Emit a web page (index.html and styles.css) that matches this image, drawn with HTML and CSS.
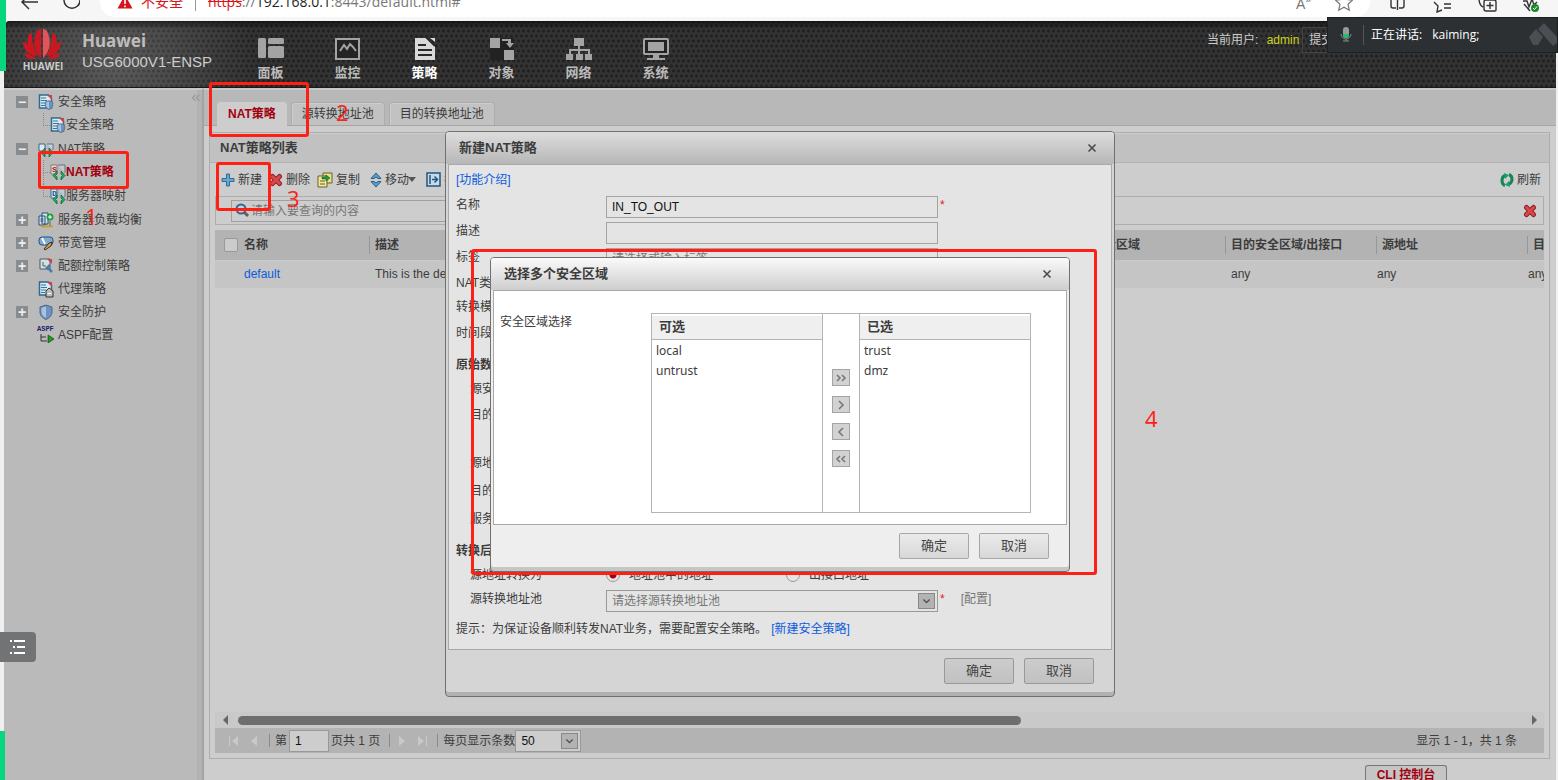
FILE: index.html
```html
<!DOCTYPE html>
<html lang="zh-CN">
<head>
<meta charset="utf-8">
<title>USG6000V1-ENSP</title>
<link rel="stylesheet" href="styles.css">
</head>
<body>
<svg class="defs" aria-hidden="true">
  <symbol id="doc" viewBox="0 0 16 16"><path d="M1.500 1h9l3 3v10h-12z" fill="#dce8ee" stroke="#2d6b92" stroke-width="1.500"/><path d="M3 4h5M3 6.500h6M3 9h5M3 11.500h4" stroke="#2b7ba6" stroke-width="1.200"/><path d="M9 1l5 5V1z" fill="#c44747"/></symbol>
  <symbol id="shield" viewBox="0 0 16 16"><path d="M8 1l6 2v5c0 4-3 6-6 7.500C5 14 2 12 2 8V3z" fill="#6c92bd" stroke="#4c678b"/><path d="M8 2.500v11.500c-2.500-1.500-4.500-3-4.500-6V4z" fill="#a9c2de"/></symbol>
  <symbol id="arrows" viewBox="0 0 16 16"><path d="M6 6L2 10.500 6 15v-3l-1.500-1.500L6 9zM10 6l4 4.500L10 15v-3l1.500-1.500L10 9z" fill="#1fae66" stroke="#0c6b3a" stroke-width=".8"/></symbol>
  <symbol id="cross" viewBox="0 0 14 14"><path d="M3.500 3.500l7 7M10.500 3.500l-7 7" stroke="#8e2127" stroke-width="5" stroke-linecap="round"/><path d="M3.500 3.500l7 7M10.500 3.500l-7 7" stroke="#d8494d" stroke-width="3" stroke-linecap="round"/></symbol>
  <symbol id="close" viewBox="0 0 10 10"><path d="M1.500 1.500l7 7M8.500 1.500l-7 7" stroke="#4a4a4a" stroke-width="1.600"/></symbol>
  <symbol id="chev" viewBox="0 0 10 10"><path d="M1 3l4 4 4-4" fill="none" stroke="#555" stroke-width="1.800"/></symbol>
</svg>

<div class="browser">
  <svg class="b-back" viewBox="0 0 60 34" width="60" height="34"><path d="M18 17H2M9 10l-7 7 7 7M46 10a8 8 0 1 0 12 0" fill="none" stroke="#333" stroke-width="1.500"/></svg>
  <div class="address">
    <svg width="16" height="16" viewBox="0 0 16 16"><path d="M8 1l7.500 13.500H.5z" fill="#d6141c"/><path d="M8 5v5M8 11.500v1.800" stroke="#fff" stroke-width="1.600"/></svg>
    <span class="insecure">不安全</span><span class="vbar"></span>
    <span class="url"><s>https</s>://<b>192.168.0.1</b>:8443/default.html#</span>
    <span class="read">A<sup>»</sup></span>
    <svg width="18" height="18" viewBox="0 0 18 18"><path d="M9 1l2.500 5.500 6 .7-4.500 4 1.300 6L9 14.200 3.700 17.200 5 11.200l-4.500-4 6-.7z" fill="none" stroke="#777" stroke-width="1.200"/></svg>
  </div>
  <svg class="b-tools" width="152" height="18" viewBox="0 0 152 18"><g fill="none" stroke="#333" stroke-width="1.400"><path d="M1 3v8q0 2 2 2h3M14 3v8q0 2-2 2H9M7.500 3v12"/><path d="M52 15l-5 2 1-6-4-4M54 9h7M54 13h7"/><path d="M96 5h8q2 0 2 2v8q0 1-1 1h-9q-2 0-2-2V7q0-2 2-2zM100 7v7M96.500 10.500h7M89 3q0 7 4 9"/><path d="M133 6h4l2 6 3-8 2 6 3-3M134 9l6 7"/></g><circle cx="145" cy="13" r="4" fill="#1a8a2e"/><path d="M143 13l1.500 1.500 2.500-3" stroke="#fff" fill="none"/></svg>
</div>

<div class="app">
  <header class="header">
    <div class="logo">
      <svg width="40" height="32" viewBox="0 0 40 32"><g fill="#cc1720"><path d="M19 30C12 23 10 14 15 3c2-2 4-2 4-2z"/><path d="M21 30C28 23 30 14 25 3c-2-2-4-2-4-2z" fill="#e2545a"/><path d="M17 29C8 24 4 16 6 8c1-2 3-3 4-3 0 9 1 16 7 24z"/><path d="M23 29c9-5 13-13 11-21-1-2-3-3-4-3 0 9-1 16-7 24z"/><path d="M14.500 29C7 27 1 22 1 13c4 2 9 8 13.500 16z"/><path d="M25.500 29C33 27 39 22 39 13c-4 2-9 8-13.500 16z"/><path d="M14.500 31H7c-2-1-4-3-5-6 5 1 9 3 12.500 6zM25.500 31H33c2-1 4-3 5-6-5 1-9 3-12.500 6z"/></g></svg>
      <span>HUAWEI</span>
    </div>
    <div class="product"><strong>Huawei</strong><span>USG6000V1-ENSP</span></div>
    <nav class="nav">
      <a href="#"><svg width="26" height="24" viewBox="0 0 26 24"><g fill="#a3a3a3"><rect x="0" y="2" width="8" height="20" rx="1.500"/><rect x="10" y="2" width="16" height="6" rx="1.500"/><rect x="10" y="10" width="16" height="12" rx="1.500"/></g></svg>面板</a>
      <a href="#"><svg width="26" height="24" viewBox="0 0 26 24"><rect x="1" y="3" width="23" height="20" fill="#242424" stroke="#a3a3a3" stroke-width="2"/><path d="M5 15l4-6 3 4 3-5 3 3 3 4" fill="none" stroke="#a3a3a3" stroke-width="2"/></svg>监控</a>
      <a href="#" class="on"><svg width="26" height="24" viewBox="0 0 26 24"><path d="M3 2h11l9 8v14H3z" fill="#d8d8d8"/><path d="M14 1l9 9M6 9h8M6 14h14M6 19h14" stroke="#292929" stroke-width="2"/><path d="M18 2h5v4z" fill="#d8d8d8"/></svg>策略</a>
      <a href="#"><svg width="26" height="24" viewBox="0 0 26 24"><path d="M1 2h24v22H1z" fill="#222"/><g fill="#a3a3a3"><path d="M1 2h10v10H1zM15 14h10v10H15zM13 3h9v4h3l-4 5-4-5h2V5h-6z"/></g></svg>对象</a>
      <a href="#"><svg width="26" height="24" viewBox="0 0 26 24"><path d="M8 2h10v8H8zM0 18h7v6H0zM10 18h7v6h-7zM19 18h7v6h-7z" fill="#a3a3a3"/><path d="M13 9v9M4 18v-4h19v4" fill="none" stroke="#a3a3a3" stroke-width="2"/></svg>网络</a>
      <a href="#"><svg width="26" height="24" viewBox="0 0 26 24"><rect x="1" y="3" width="24" height="15" rx="1" fill="#222" stroke="#a3a3a3" stroke-width="2"/><path d="M5 6h16v9H5zM10 19h6v3h6v2H4v-2h6z" fill="#a3a3a3"/></svg>系统</a>
    </nav>
    <div class="user"><span>当前用户: <em>admin</em></span><button>提交</button></div>
  </header>

  <div class="main">
    <aside class="side">
      <ul class="tree">
        <li class="top"><i class="tog">−</i><span class="ic"><svg><use href="#doc"/></svg><svg class="half"><use href="#shield"/></svg></span>安全策略</li>
        <li class="kid last"><span class="ic"><svg><use href="#doc"/></svg><svg class="half"><use href="#shield"/></svg></span>安全策略</li>
        <li class="top"><i class="tog">−</i><span class="ic"><svg viewBox="0 0 16 16"><path d="M1 3h6v7H1z" fill="#dfe9ee" stroke="#2d6b92"/><path d="M9 3h6v6" fill="#c9d4de" stroke="#5e7188"/></svg><svg class="over"><use href="#arrows"/></svg></span>NAT策略</li>
        <li class="kid sel"><span class="ic"><svg viewBox="0 0 16 16"><path d="M1 1h6v9H1z" fill="#e4dfe0" stroke="#8a7070"/><path d="M8 1h7v8" fill="#cfc3d5" stroke="#5e7188"/></svg><small class="s">S</small><svg class="over"><use href="#arrows"/></svg></span>NAT策略</li>
        <li class="kid last"><span class="ic"><svg viewBox="0 0 16 16"><path d="M1 1h6v9H1z" fill="#dbe7ef" stroke="#2d6b92"/><path d="M8 1h7v8" fill="#b9cfdc" stroke="#5e7188"/></svg><small class="d">D</small><svg class="over"><use href="#arrows"/></svg></span>服务器映射</li>
        <li class="top"><i class="tog">+</i><span class="ic"><svg viewBox="0 0 16 16"><path d="M4 1h6v11H4zM1 4h6v9H1z" fill="#d5e3ee" stroke="#2a4d78"/><path d="M2.500 7h3M2.500 9h3" stroke="#2a4d78"/><path d="M3 14.500h12" stroke="#caa02e" stroke-width="2"/><circle cx="12" cy="5" r="3.500" fill="#1f9e3c"/><path d="M12 3v4M10 5h4" stroke="#fff"/><path d="M12 9v5" stroke="#666"/></svg></span>服务器负载均衡</li>
        <li class="top"><i class="tog">+</i><span class="ic"><svg viewBox="0 0 16 16"><rect x="1" y="2" width="14" height="8" rx="3" fill="#7fabd0" stroke="#27527b"/><path d="M4 3l3 6" stroke="#fff" stroke-width="2"/><path d="M6 14l5-6 3-1-1 4-6 4z" fill="#d79a37" stroke="#333"/></svg></span>带宽管理</li>
        <li class="top"><i class="tog">+</i><span class="ic"><svg viewBox="0 0 16 16"><path d="M2 1h10v10H2z" fill="#d9dee2" stroke="#557"/><path d="M9 1l5 5V1z" fill="#c44747"/><path d="M5 4v4h3" fill="none" stroke="#16883c"/><path d="M9 9l5 5M8 11l4-4" stroke="#4b7ba4" stroke-width="2.500"/></svg></span>配额控制策略</li>
        <li class="top"><i class="tog none"></i><span class="ic"><svg><use href="#doc"/></svg><svg class="over" viewBox="0 0 16 16"><path d="M7 9l3-3 4 3v6H7z" fill="#bcbcbc" stroke="#333"/><path d="M8.500 11.500h4" stroke="#fff"/></svg></span>代理策略</li>
        <li class="top"><i class="tog">+</i><span class="ic"><svg><use href="#shield"/></svg></span>安全防护</li>
        <li class="top"><i class="tog none"></i><span class="ic"><small class="aspf">ASPF</small><svg viewBox="0 0 16 16"><path d="M3 7v7h6M3 10h5" fill="none" stroke="#333"/><path d="M10 8l6 4-6 4z" fill="#18a019" stroke="#222" stroke-width=".6"/></svg></span>ASPF配置</li>
      </ul>
      <button class="fold" aria-label="收起">«</button>
    </aside>

    <section class="content">
      <nav class="tabs"><a href="#" class="active">NAT策略</a><a href="#">源转换地址池</a><a href="#">目的转换地址池</a></nav>
      <div class="panel">
        <h1>NAT策略列表</h1>
        <div class="toolbar">
          <button><svg width="14" height="14" viewBox="0 0 14 14"><path d="M5.500 1h3v4.500H13v3H8.500V13h-3V8.500H1v-3h4.500z" fill="#68a9d1" stroke="#2d6c94"/></svg>新建</button>
          <button><svg width="14" height="14"><use href="#cross"/></svg>删除</button>
          <button class="wide"><svg width="16" height="16" viewBox="0 0 16 16"><path d="M6 1h9v10H6z" fill="#e9dd8a" stroke="#65602b"/><path d="M1 4h9v11H1z" fill="#f2e79b" stroke="#65602b"/><path d="M3 9h5M3 12h5" stroke="#65602b"/><path d="M5 5h4V3l4 3-4 3V7H5z" fill="#1f9a3e" stroke="#0b5a20" stroke-width=".5"/></svg>复制</button>
          <button class="wide"><svg width="12" height="16" viewBox="0 0 12 16"><path d="M6 1l5 5.500H8L6 5 4 6.500H1zM6 15l5-5.500H8L6 11 4 9.500H1z" fill="#5b9cc6" stroke="#2d6389"/></svg>移动<i class="caret"></i></button>
          <button><svg width="15" height="15" viewBox="0 0 15 15"><path d="M1 1h13v13H1z" fill="#c6dae8" stroke="#225680" stroke-width="1.500"/><path d="M4 3v9M6 7.500h5M8.500 4.500l3 3-3 3" fill="none" stroke="#225680" stroke-width="1.500"/></svg>插入</button>
          <button class="refresh"><svg width="14" height="14" viewBox="0 0 14 14"><path d="M5 12.500C1 11 1 4 5 2.500M9 1.500c4 1.500 4 8 0 9.500" fill="none" stroke="#138556" stroke-width="3"/><path d="M4 0l5 2-4 4zM10 14l-5-2 4-4z" fill="#1d9c63"/></svg>刷新</button>
        </div>
        <div class="search"><label><svg width="15" height="15" viewBox="0 0 15 15"><path d="M9 9l4 4" stroke="#665d59" stroke-width="3"/><circle cx="6" cy="6" r="4.500" fill="#c1d4e2" stroke="#37648d" stroke-width="2"/></svg><input type="text" placeholder="请输入要查询的内容" aria-label="查询"></label><button aria-label="清除"><svg width="14" height="14"><use href="#cross"/></svg></button></div>
        <div class="grid">
          <table>
            <colgroup><col class="c1"><col class="c2"><col class="c3"><col class="c4"><col class="c4"><col class="c4"></colgroup>
            <thead><tr><th><label><input type="checkbox" aria-label="全选">名称</label></th><th><span>描述</span></th><th><span>源安全区域</span></th><th><span>目的安全区域/出接口</span></th><th><span>源地址</span></th><th><span>目的地址</span></th></tr></thead>
            <tbody><tr><td class="first"><a href="#">default</a></td><td>This is the default rule</td><td>any</td><td>any</td><td class="near">any</td><td class="near">any</td></tr></tbody>
          </table>
        </div>
        <div class="hscroll"><i class="la"></i><div class="track"><div class="thumb"></div></div><i class="ra"></i></div>
        <div class="pager">
          <button aria-label="首页"><svg width="12" height="12" viewBox="0 0 12 12"><path d="M1 1h1v10H1zM10 1v10L4 6z"/></svg></button>
          <button aria-label="上一页"><svg width="12" height="12" viewBox="0 0 12 12"><path d="M9 1v10L3 6z"/></svg></button>
          <i class="sep"></i><label>第<input type="text" value="1">页共 1 页</label><i class="sep"></i>
          <button aria-label="下一页"><svg width="12" height="12" viewBox="0 0 12 12"><path d="M3 1v10l6-5z"/></svg></button>
          <button aria-label="末页"><svg width="12" height="12" viewBox="0 0 12 12"><path d="M10 1h1v10h-1zM2 1v10l6-5z"/></svg></button>
          <i class="sep"></i><label>每页显示条数<span class="pick"><select><option>50</option></select><svg><use href="#chev"/></svg></span></label>
          <span class="total">显示 1 - 1，共 1 条</span>
        </div>
      </div>
      <button class="cli">CLI 控制台</button>
    </section>
  </div>

  <section class="dialog policy" role="dialog" aria-labelledby="t1">
    <header><h2 id="t1">新建NAT策略</h2><button aria-label="关闭"><svg width="10" height="10"><use href="#close"/></svg></button></header>
    <div class="body">
      <a href="#" class="intro">[功能介绍]</a>
      <div class="row h26"><label for="n">名称</label><input id="n" type="text" value="IN_TO_OUT"><b class="req">*</b></div>
      <div class="row h26"><label for="d">描述</label><input id="d" type="text"></div>
      <div class="row h26"><label for="g">标签</label><input id="g" type="text" placeholder="请选择或输入标签"></div>
      <div class="row h24"><span>NAT类型</span></div>
      <div class="row h26"><span>转换模式</span></div>
      <div class="row h32"><span>时间段</span></div>
      <h3 class="row h24">原始数据包</h3>
      <div class="row h26 sub"><span>源安全区域</span></div>
      <div class="row h48 sub"><span>目的类型</span></div>
      <div class="row h28 sub"><span>源地址</span></div>
      <div class="row h28 sub"><span>目的地址</span></div>
      <div class="row h32 sub"><span>服务</span></div>
      <h3 class="row h24">转换后的数据包</h3>
      <div class="row h24 sub"><span>源地址转换为</span><label class="radio"><input type="radio" name="to" checked>地址池中的地址</label><label class="radio"><input type="radio" name="to">出接口地址</label></div>
      <div class="row h30 sub"><label for="p">源转换地址池</label><span class="pick"><select id="p"><option>请选择源转换地址池</option></select><svg><use href="#chev"/></svg></span><b class="req">*</b><a href="#" class="conf">[配置]</a></div>
      <p class="tip">提示：为保证设备顺利转发NAT业务，需要配置安全策略。<a href="#">[新建安全策略]</a></p>
    </div>
    <footer><button>确定</button><button>取消</button></footer>
  </section>

  <section class="dialog zones" role="dialog" aria-labelledby="t2">
    <header><h2 id="t2">选择多个安全区域</h2><button aria-label="关闭"><svg width="10" height="10"><use href="#close"/></svg></button></header>
    <div class="body">
      <span class="zlabel">安全区域选择</span>
      <div class="transfer">
        <div class="list"><h4>可选</h4><ul><li>local</li><li>untrust</li></ul></div>
        <div class="moves">
          <button aria-label="全部添加"><svg width="12" height="10" viewBox="0 0 12 10"><path d="M2 2l3 3-3 3M7 2l3 3-3 3"/></svg></button>
          <button aria-label="添加"><svg width="12" height="10" viewBox="0 0 12 10"><path d="M4 1l4 4-4 4"/></svg></button>
          <button aria-label="移除"><svg width="12" height="10" viewBox="0 0 12 10"><path d="M8 1L4 5l4 4"/></svg></button>
          <button aria-label="全部移除"><svg width="12" height="10" viewBox="0 0 12 10"><path d="M5 2L2 5l3 3M10 2L7 5l3 3"/></svg></button>
        </div>
        <div class="list right"><h4>已选</h4><ul><li>trust</li><li>dmz</li></ul></div>
      </div>
    </div>
    <footer><button>确定</button><button>取消</button></footer>
  </section>
</div>

<div class="meeting">
  <svg width="14" height="18" viewBox="0 0 14 18"><rect x="4" y="1" width="6" height="11" rx="3" fill="#9a9a9a"/><path d="M4 8h6v1a3 3 0 0 1-6 0z" fill="#1fc068"/><path d="M2 8a5 5 0 0 0 10 0M7 13v2M4 15h6" fill="none" stroke="#8a8a8a" stroke-width="1"/></svg>
  <span class="mbar"></span><span>正在讲话:</span><span class="who">kaiming;</span>
  <svg class="brand" width="28" height="24" viewBox="0 0 28 24"><path d="M0 14l7-8 7 8-5 8H4zM9 6l6-6 13 14v6l-4 3z" fill="#4b4f53"/></svg>
</div>
<div class="green g1"></div><div class="green g2"></div>
<button class="drawer" aria-label="列表"><svg width="18" height="16" viewBox="0 0 18 16"><path d="M1 2h2M5 2h11M4 8h2M8 8h8M1 14h2M5 14h11" stroke="#fff" stroke-width="2"/></svg></button>
<div class="mark m1"></div><div class="mark m2"></div><div class="mark m3"></div><div class="mark m4"></div>
<span class="num n1">1</span><span class="num n2">2</span><span class="num n3">3</span><span class="num n4">4</span>
</body>
</html>
```
FILE: styles.css
```css
* { box-sizing: border-box; }
body { margin: 0; height: 100vh; display: flex; flex-direction: column; position: relative; overflow: hidden; background: #f0f0f0; color: #3c3c3c; font: 12px/18px "Liberation Sans", "Noto Sans CJK SC", sans-serif; }
button, input, select { font: inherit; color: inherit; margin: 0; }
button { background: none; border: 0; padding: 0; }
a { color: #0b5be0; text-decoration: none; }
h1, h2, h3, h4, p, ul { margin: 0; padding: 0; list-style: none; }
i, em { font-style: normal; }
svg { flex: none; }
.defs { position: absolute; width: 0; height: 0; }

/* browser strip */
.browser { height: 21px; flex: none; display: flex; align-items: flex-end; padding: 0 16px 4px 20px; background: #f6f6f6; overflow: hidden; }
.b-back { margin-right: 20px; margin-bottom: -2px; }
.address { flex: 1; height: 30px; display: flex; align-items: center; gap: 8px; padding: 0 17px; background: #fff; border-radius: 15px; font-size: 14px; }
.insecure { color: #d6141c; }
.vbar { width: 1px; height: 18px; background: #999; margin: 0 4px; }
.url { flex: 1; color: #777; font-family: "Open Sans", sans-serif; }
.url s { color: #d6141c; }
.url b { color: #222; font-weight: 400; }
.read { color: #777; margin-right: 16px; }
.read sup { font-size: 10px; }
.b-tools { margin: 0 0 4px 20px; }

.app { flex: 1; min-height: 0; margin: 0 2px 0 4px; display: flex; flex-direction: column; position: relative; }
.header { height: 67px; flex: none; display: flex; padding-left: 18px; background-color: #333; background-image: linear-gradient(#0008, #0000 8px), radial-gradient(circle at 110px 40px, #fff3, #fff0 140px), radial-gradient(circle, #202020 1px, #20202000 2px), radial-gradient(circle, #202020 1px, #20202000 2px); background-size: auto, auto, 5px 10px, 5px 10px; background-position: 0 0, 0 0, 0 0, 2px 5px; border-radius: 6px 0 0; border-bottom: 1px solid #1a1a1a; }
.logo { width: 42px; padding-top: 7px; text-align: center; font: bold 10px/12px "Open Sans", sans-serif; color: #ccc; }
.logo svg { display: block; }
.product { width: 150px; margin-left: 18px; padding-top: 9px; color: #ccc; font-size: 15px; line-height: 20px; }
.product strong { display: block; font: bold 17px/22px "Noto Sans", sans-serif; color: #bdbdbd; }
.nav { display: flex; }
.nav a { width: 77px; padding-top: 15px; display: flex; flex-direction: column; align-items: center; gap: 5px; color: #bbb; font-weight: bold; font-size: 13px; line-height: 16px; }
.nav .on { color: #fff; }
.user { margin-left: auto; width: 349px; display: flex; gap: 3px; padding-top: 6px; color: #ccc; line-height: 26px; }
.user em { color: #c8d617; margin-left: 5px; }
.user button { border: 1px solid #444; padding: 0 6px; line-height: 24px; height: 26px; }

.main { flex: 1; min-height: 0; display: flex; background: #cdcdcd; }
.side { width: 200px; flex: none; background: #bababa; border-right: 2px solid #a3a3a3; border-top: 2px solid #c8c8c8; display: flex; justify-content: space-between; align-items: flex-start; box-shadow: inset -5px 0 #b2b2b2; }
.tree { padding-left: 12px; color: #3c3c3c; white-space: nowrap; }
.top, .kid { display: flex; align-items: center; height: 23px; }
.kid { height: 24px; margin-left: 27px; padding-left: 7px; position: relative; }
.kid::before { content: ""; position: absolute; left: 0; top: 0; width: 6px; height: 12px; border-left: 1px dotted #888; border-bottom: 1px dotted #888; }
.kid:not(.last)::after { content: ""; position: absolute; left: 0; top: 12px; height: 12px; border-left: 1px dotted #888; }
.sel { color: #a3000f; font-weight: bold; }
.tog { width: 12px; height: 12px; margin-right: 10px; background: #898c8e; color: #eee; font: bold 14px/12px "Liberation Sans"; text-align: center; }
.none { background: none; }
.ic { position: relative; width: 16px; height: 16px; margin-right: 4px; }
.kid .ic { margin-right: 0; }
.ic svg { position: absolute; width: 16px; height: 16px; left: 0; top: 0; }
.ic .half { width: 10px; height: 10px; left: 6px; top: 6px; }
.ic .over { left: 1px; top: 1px; }
.ic small { position: absolute; left: 2px; top: 1px; font: bold 8px/9px "Liberation Mono"; color: #a02020; }
.ic .d { color: #165b9a; }
.ic .aspf { color: #22226e; top: -2px; left: -1px; font-size: 7px; }
.fold { width: 12px; color: #999; font-size: 17px; line-height: 13px; }

.content { flex: 1; min-width: 0; display: flex; flex-direction: column; }
.tabs { height: 38px; flex: none; display: flex; align-items: flex-end; gap: 4px; padding: 0 13px; background: #b8b8b8; border-top: 2px solid #c8c8c8; border-bottom: 1px solid #a6a6a6; }
.tabs a { height: 23px; padding: 0 10px; border: 1px solid #adadad; border-bottom: 0; border-radius: 4px 4px 0 0; background: #c2c2c2; color: #3c3c3c; line-height: 22px; box-shadow: inset 1px 1px #cecece; }
.tabs .active { background: #cdcdcd; border-color: #cdcdcd; color: #a3000f; font-weight: bold; margin-bottom: -1px; height: 24px; }
.panel { flex: 1; min-height: 0; margin: 6px 6px 0 5px; border: 1px solid #adadad; padding: 1px 0 5px; display: flex; flex-direction: column; }
.panel > * { margin: 0 5px; }
.panel h1 { margin: 0; padding-left: 10px; height: 29px; background: #c1c1c1; border-bottom: 1px solid #b3b3b3; font-size: 13px; line-height: 28px; }
.toolbar { height: 33px; display: flex; align-items: center; gap: 7px; padding-left: 6px; }
.toolbar button { display: flex; align-items: center; gap: 3px; white-space: nowrap; }
.toolbar .wide { margin-right: 3px; }
.caret { border: 4px solid transparent; border-top: 5px solid #555; border-bottom: 0; margin-left: -4px; }
.toolbar .refresh { margin: 0 3px 0 auto; }
.search { height: 29px; display: flex; align-items: center; justify-content: space-between; padding: 0 6px 0 15px; border: 1px solid #adadad; }
.search label { width: 50%; height: 22px; display: flex; align-items: center; padding-left: 3px; border: 1px solid #a0a0a0; }
.search input { flex: 1; border: 0; background: none; padding: 0 1px; outline: 0; }
::placeholder { color: #777; opacity: 1; }
.search button, .search svg { display: block; }
.grid { flex: 1; min-height: 0; overflow: hidden; margin-top: 5px; }
table { table-layout: fixed; border-collapse: collapse; width: 1463px; }
.c1 { width: 154px; } .c2 { width: 705px; } .c3, .c4 { width: 151px; }
th, td { padding: 0; text-align: left; white-space: nowrap; }
thead { background: #b3b3b3; }
th { height: 30px; border-bottom: 1px solid #c9c9c9; }
th span { display: block; border-left: 1px solid #979797; padding-left: 5px; }
th label { display: flex; align-items: center; gap: 6px; padding-left: 9px; }
th input { appearance: none; width: 14px; height: 14px; background: #cbcbcb; border: 1px solid #999; border-radius: 2px; }
td { height: 28px; background: #c5c5c5; padding-left: 6px; }
.first { padding-left: 29px; }
.near { padding-left: 1px; }
.hscroll { height: 16px; display: flex; align-items: center; padding: 0 7px 0 8px; background: #c9c9c9; }
.la, .ra { border: 5px solid transparent; border-right: 5px solid #666; border-left: 0; margin-right: 10px; }
.ra { border-left: 5px solid #666; border-right: 0; margin: 0 0 0 10px; }
.track { flex: 1; }
.thumb { width: 61%; height: 9px; border-radius: 5px; background: #6e6e6e; }
.pager { height: 25px; display: flex; align-items: center; gap: 8px; padding: 0 27px 0 13px; background: #b3b3b3; }
.pager svg { fill: #c9c9c9; display: block; }
.pager .pick svg { fill: none; }
.pager label { display: flex; align-items: center; gap: 2px; }
.pager button { width: 12px; }
.sep { width: 1px; height: 13px; background: #8c8c8c; margin-left: 1px; margin-right: -3px; }
.pager .sep + button { margin-left: 1px; }
.pager input { width: 40px; height: 22px; padding: 0 5px; background: #cdcdcd; border: 1px solid #999; color: #111; }
.total { margin-left: auto; }
.pick { position: relative; display: block; }
.pick select { appearance: none; width: 66px; height: 22px; padding: 0 5px; background: #cdcdcd; border: 1px solid #999; border-radius: 0; color: #111; }
.pager .pick { margin-left: -2px; }
.pick svg { position: absolute; right: 3px; top: 3px; width: 17px; height: 16px; padding: 3px; border: 1px solid #888; background: #b3b3b3; pointer-events: none; }
.cli { align-self: flex-end; margin: 6px 109px 0 0; width: 82px; height: 15px; flex: none; border: 1px solid #777; border-bottom: 0; border-radius: 3px 3px 0 0; background: #c5c5c5; color: #a3000f; font-weight: bold; line-height: 18px; overflow: hidden; }

/* dialogs */
.dialog { position: absolute; left: 0; right: 0; margin: 0 auto; display: flex; flex-direction: column; border: 1px solid #707070; border-radius: 4px; }
.policy { top: 110px; width: 670px; background: #d5d5d5; box-shadow: inset 0 -4px #b1b1b1; }
.zones { top: 236px; width: 580px; background: #eee; box-shadow: inset 0 -4px #c6c6c6; }
.dialog header { height: 32px; display: flex; align-items: center; justify-content: space-between; padding: 0 17px 0 13px; background: linear-gradient(#ddd, #b7b7b7); border-radius: 3px 3px 0 0; }
.zones header { background: linear-gradient(#fafafa, #cecece); }
.dialog h2 { font-size: 13px; line-height: 18px; }
.dialog svg { display: block; }
.dialog .body { margin: 0 2px; border: 1px solid #a9a9a9; }
.policy .body { background: #e4e4e4; padding: 6px 7px 0; height: 486px; }
.intro { display: block; margin-bottom: 7px; }
.row { display: flex; align-items: flex-start; font-size: 12px; }
.row > :first-child { width: 150px; white-space: nowrap; }
.sub { padding-left: 14px; }
.sub > :first-child { width: 136px; }
.h24 { height: 24px; } .h26 { height: 26px; } .h28 { height: 28px; } .h30 { height: 30px; } .h32 { height: 32px; } .h48 { height: 48px; }
.row input[type=text] { width: 332px; height: 22px; padding: 0 5px; border: 1px solid #a3a3a3; background: #e4e4e4; color: #111; }
.req { color: #e02020; font-weight: 400; margin-left: 2px; }
.radio { width: 180px; display: flex; align-items: center; gap: 9px; line-height: 18px; }
.radio input { appearance: none; width: 14px; height: 14px; border: 1px solid #999; border-radius: 50%; background: #e4e4e4; }
.radio input:checked { background: radial-gradient(circle, #a3000f 3px, #e4e4e4 4px); }
.row .pick select { width: 332px; background: #e4e4e4; color: #777; }
.conf { color: #777; margin-left: 16px; }
.tip { white-space: nowrap; }
.tip a { margin-left: 4px; }
.dialog footer { height: 46px; display: flex; justify-content: flex-end; gap: 10px; padding: 8px 20px 0; }
.dialog footer button { width: 70px; height: 26px; border: 1px solid #999; border-radius: 2px; background: linear-gradient(#ccc, #c1c1c1); font-size: 13px; color: #444; }
.zones footer button { background: linear-gradient(#eaeaea, #d8d8d8); border-color: #a7a7a7; }
.zones .body { background: #fff; height: 235px; display: flex; align-items: flex-start; padding: 22px 35px 11px 6px; }
.zlabel { flex: 1; }
.transfer { width: 380px; height: 200px; display: flex; border: 1px solid #b3b3b8; }
.list { flex: 1; }
.list:first-child { border-right: 1px solid #b3b3b8; }
.list.right { border-left: 1px solid #b3b3b8; }
.list h4 { height: 26px; padding-left: 7px; border-top: 2px solid #fff; border-bottom: 1px solid #b3b3b8; background: #efefef; font-size: 13px; line-height: 22px; }
.list ul { padding: 1px 4px; font: 12px/20px "Noto Sans", sans-serif; }
.moves { width: 36px; display: flex; flex-direction: column; align-items: center; gap: 10px; padding-top: 55px; }
.moves button { width: 18px; height: 17px; padding: 0 2px; border: 1px solid #a3a3a8; background: #d2d2d2; }
.moves path { fill: none; stroke: #777; stroke-width: 1.600; }

/* floating layers */
.meeting { position: absolute; right: 0; top: 17px; width: 231px; height: 36px; display: flex; align-items: center; gap: 9px; padding-left: 11px; background: #2c3033; border: 1px solid #1d1f21; color: #fff; font-family: "Open Sans", "Noto Sans CJK SC", sans-serif; }
.mbar { width: 1px; height: 20px; background: #555; margin: 0 -2px 0 1px; }
.who { margin-left: 1px; }
.brand { margin-left: auto; }
.green { position: absolute; left: 0; width: 6px; background: #07d67c; }
.g1 { top: 0; height: 71px; }
.g2 { width: 5px; bottom: 0; height: 49px; }
.drawer { position: absolute; left: 0; top: 632px; width: 36px; height: 30px; display: grid; place-items: center; background: #727375; border-radius: 0 4px 4px 0; }
.mark { position: absolute; border: 3px solid #ff2015; border-radius: 3px; pointer-events: none; }
.m1 { left: 209px; top: 82px; width: 100px; height: 55px; }
.m2 { left: 38px; top: 151px; width: 91px; height: 38px; }
.m3 { left: 216px; top: 162px; width: 55px; height: 49px; }
.m4 { left: 471px; top: 249px; width: 626px; height: 326px; }
.num { position: absolute; color: #ff2015; font: 22px/24px "Open Sans", sans-serif; }
.n1 { left: 85px; top: 204px; }
.n2 { left: 336px; top: 100px; }
.n3 { left: 287px; top: 186px; }
.n4 { left: 1145px; top: 406px; }
```
